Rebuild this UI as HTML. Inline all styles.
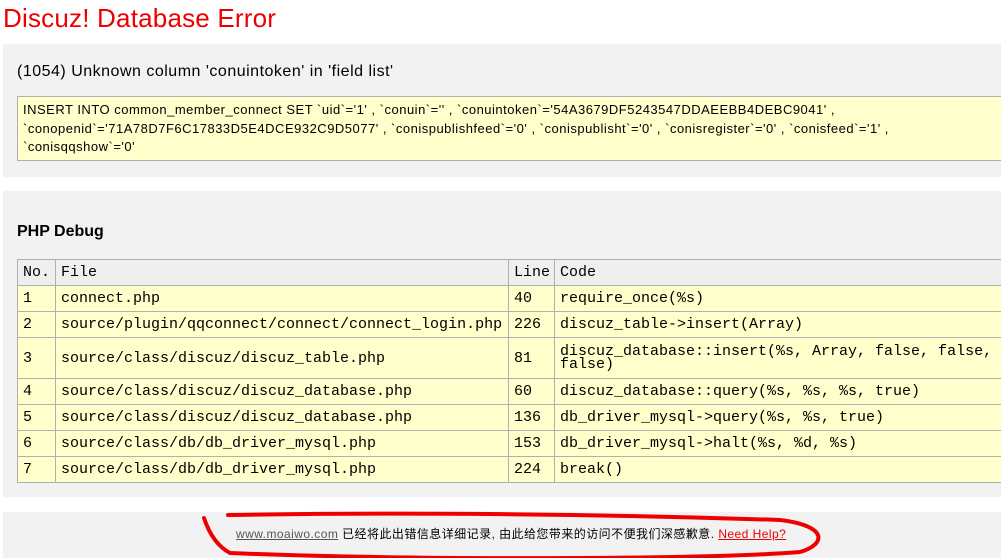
<!DOCTYPE html>
<html><head><meta charset="utf-8"><style>
html,body{margin:0;padding:0;width:1001px;height:558px;overflow:hidden;background:#fff;position:relative;font-family:"Liberation Sans",Verdana,sans-serif;}
.title{position:absolute;left:3px;top:3px;font-size:26px;letter-spacing:0.2px;color:#e00;white-space:nowrap;}
.box{position:absolute;left:3px;width:1100px;background:#f2f2f2;}
.msg{position:absolute;left:17px;top:63px;font-size:16px;letter-spacing:0.5px;color:#000;white-space:nowrap;}
.sql{position:absolute;left:17px;top:96px;width:1100px;height:65px;background:#ffffcc;border:1px solid #b0b0b0;box-sizing:border-box;font-size:13px;letter-spacing:0.5px;line-height:18.5px;padding:4px 5px;color:#000;white-space:nowrap;}
.h{position:absolute;left:17px;top:223px;font-size:16px;font-weight:bold;}
table{position:absolute;left:17px;top:259px;border-collapse:collapse;table-layout:fixed;width:1150px;font-family:"Liberation Mono",monospace;font-size:15px;}
td{border:1px solid #b0b0b0;background:#ffffcc;padding:0 5px;height:25px;vertical-align:middle;white-space:nowrap;line-height:13px;overflow:hidden;}
tr.hd td{background:#efefef;}
.foot{position:absolute;left:236px;top:525px;font-size:12px;letter-spacing:0.45px;white-space:nowrap;font-family:"Liberation Sans","Noto Sans CJK SC",sans-serif;color:#000;}
.foot a{color:#555;text-decoration:underline;}
.foot a.r{color:#e00;}
svg{position:absolute;left:0;top:0;}
</style></head><body>
<div class="title">Discuz! Database Error</div>
<div class="box" style="top:44px;height:133px"></div>
<div class="msg">(1054) Unknown column 'conuintoken' in 'field list'</div>
<div class="sql">INSERT INTO common_member_connect SET `uid`='1' , `conuin`='' , `conuintoken`='54A3679DF5243547DDAEEBB4DEBC9041' ,<br>`conopenid`='71A78D7F6C17833D5E4DCE932C9D5077' , `conispublishfeed`='0' , `conispublisht`='0' , `conisregister`='0' , `conisfeed`='1' ,<br>`conisqqshow`='0'</div>
<div class="box" style="top:191px;height:306px"></div>
<div class="h">PHP Debug</div>
<table>
<colgroup><col style="width:38px"><col style="width:453px"><col style="width:46px"><col></colgroup>
<tr class="hd"><td>No.</td><td>File</td><td>Line</td><td>Code</td></tr>
<tr><td>1</td><td>connect.php</td><td>40</td><td>require_once(%s)</td></tr>
<tr><td>2</td><td>source/plugin/qqconnect/connect/connect_login.php</td><td>226</td><td>discuz_table-&gt;insert(Array)</td></tr>
<tr><td style="height:40px">3</td><td>source/class/discuz/discuz_table.php</td><td>81</td><td>discuz_database::insert(%s, Array, false, false,<br>false)</td></tr>
<tr><td>4</td><td>source/class/discuz/discuz_database.php</td><td>60</td><td>discuz_database::query(%s, %s, %s, true)</td></tr>
<tr><td>5</td><td>source/class/discuz/discuz_database.php</td><td>136</td><td>db_driver_mysql-&gt;query(%s, %s, true)</td></tr>
<tr><td>6</td><td>source/class/db/db_driver_mysql.php</td><td>153</td><td>db_driver_mysql-&gt;halt(%s, %d, %s)</td></tr>
<tr><td>7</td><td>source/class/db/db_driver_mysql.php</td><td>224</td><td>break()</td></tr>
</table>
<div class="box" style="top:512px;height:46px"></div>
<div class="foot"><a>www.moaiwo.com</a> 已经将此出错信息详细记录, 由此给您带来的访问不便我们深感歉意. <a class="r">Need Help?</a></div>
<svg width="1001" height="558"><path d="M228 515 C400 512 600 514 780 520 C830 526 825 545 800 552 C700 560 400 560 230 553 C215 545 208 530 204 518" fill="none" stroke="#e00" stroke-width="4" stroke-linecap="round"/></svg>
</body></html>
